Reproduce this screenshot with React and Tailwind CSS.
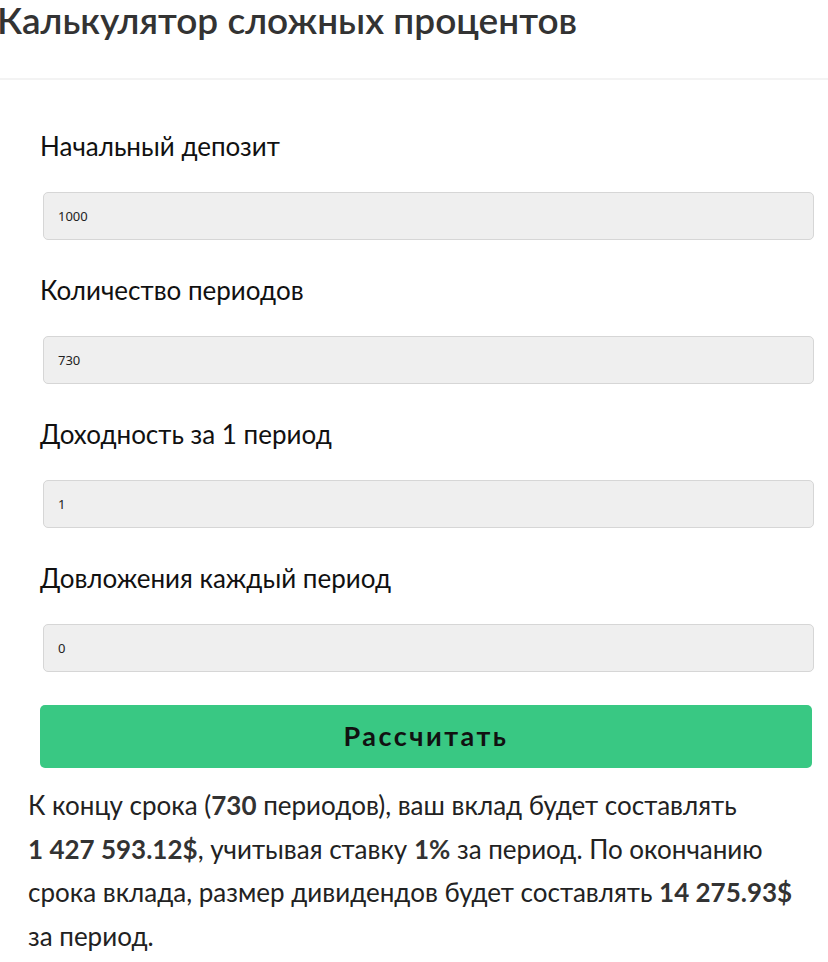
import React from "react";

const fields = [
  { label: "Начальный депозит", value: "1000" },
  { label: "Количество периодов", value: "730" },
  { label: "Доходность за 1 период", value: "1" },
  { label: "Довложения каждый период", value: "0" },
];

const Field = ({ label, value }) => (
  <div className="flex flex-col">
    <label className="pl-[40px] h-[96px] pt-[33px] text-[26px] leading-[34px] text-[#111]">
      {label}
    </label>
    <input
      type="text"
      defaultValue={value}
      className="ml-[43px] mr-[14px] h-[48px] rounded-[5px] border border-[#d6d6d6] bg-[#efefef] px-[14px] text-[13px] text-[#222] outline-none font-['Noto_Sans',sans-serif]"
    />
  </div>
);

export default function App() {
  return (
    <div className="w-[828px] bg-white font-['Lato',sans-serif] text-[#111]">
      <h1 className="-ml-[3px] h-[78px] text-[37px] leading-[40px] font-semibold text-[#333] whitespace-nowrap">
        Калькулятор сложных процентов
      </h1>
      <div className="border-t-2 border-[#f3f3f3] pt-[16px]">
        <div className="flex flex-col">
          {fields.map((f) => (
            <Field key={f.label} {...f} />
          ))}
        </div>
        <button className="mt-[33px] ml-[40px] w-[772px] h-[63px] rounded-[5px] bg-[#39c883] text-[27px] font-bold tracking-[2.5px] text-[#111]">
          Рассчитать
        </button>
        <p className="mt-[16px] pl-[28px] pr-[30px] text-[26px] leading-[43.5px] text-[#222]">
          К концу срока (<b className="text-[#333]">730</b> периодов), ваш
          вклад будет составлять{" "}
          <b className="text-[#333] whitespace-nowrap">1 427 593.12$</b>,
          учитывая ставку <b className="text-[#333]">1%</b> за период. По
          окончанию срока вклада, размер дивидендов будет составлять{" "}
          <b className="text-[#333] whitespace-nowrap">14 275.93$</b> за
          период.
        </p>
      </div>
    </div>
  );
}
